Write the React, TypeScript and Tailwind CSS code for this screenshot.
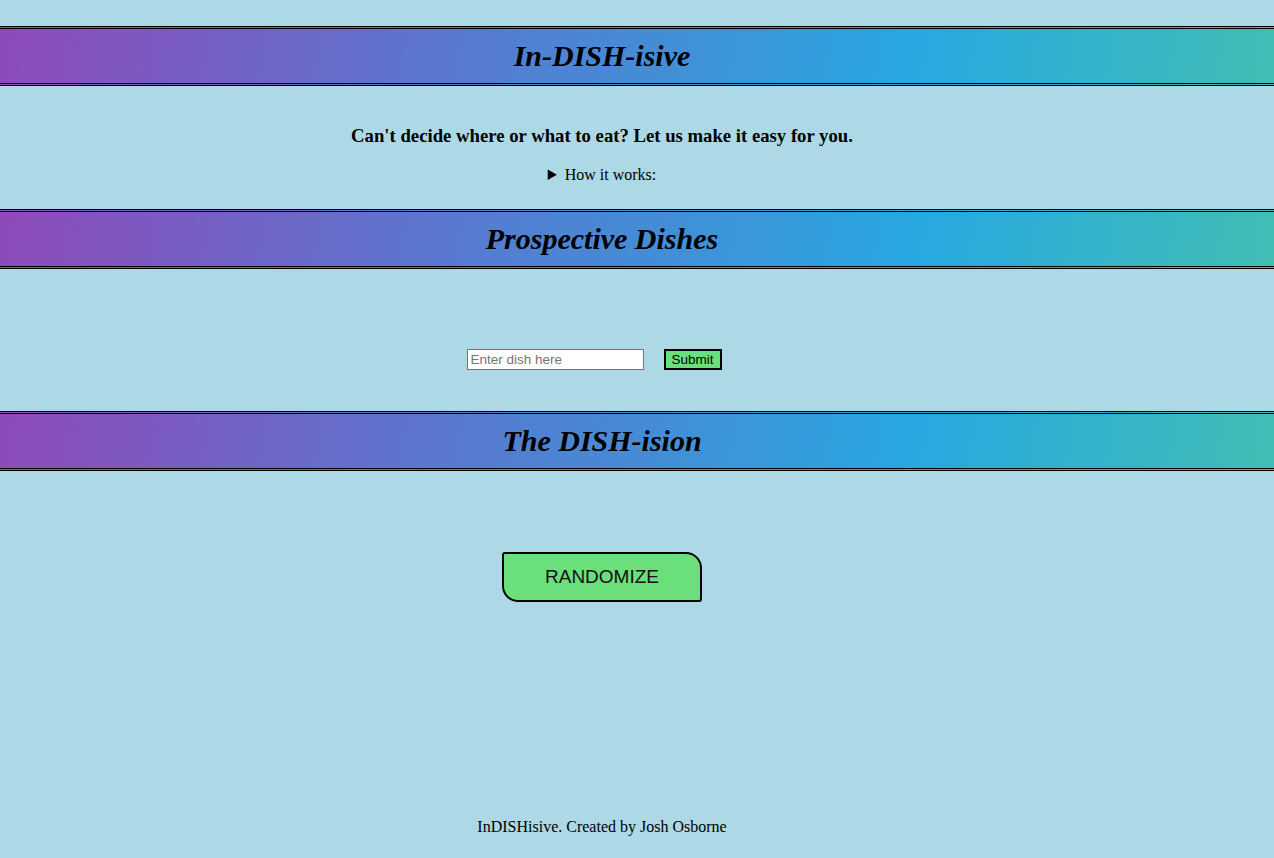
import { useState } from 'react';

function Banner({ title }: { title: string }) {
  return (
    <div className="w-full h-[60px] flex items-center justify-center border-y-[3px] border-double border-black bg-[linear-gradient(100deg,#8e4ab9_0%,#5a78cf_35%,#27a8e0_72%,#42bdb4_100%)]">
      <h1 className="pr-[70px] w-full text-center text-[30px] font-bold italic text-black leading-[36px]">{title}</h1>
    </div>
  );
}

export default function App() {
  const [dish, setDish] = useState('');
  const [dishes, setDishes] = useState<string[]>([]);

  const handleSubmit = () => {
    if (!dish.trim()) return;
    setDishes([...dishes, dish.trim()]);
    setDish('');
  };

  return (
    <div className="min-h-[858px] bg-[#add8e6] pt-[26px] flex flex-col text-black" style={{ fontFamily: '"Liberation Serif", "Times New Roman", serif' }}>
      <Banner title="In-DISH-isive" />

      {/* intro */}
      <div className="pr-[70px] flex flex-col items-center">
        <p className="mt-[39px] text-[18.72px] leading-[22px] font-bold">
          Can't decide where or what to eat? Let us make it easy for you.
        </p>
        <details className="mt-[19px] text-[16px] leading-[18px]">
          <summary className="cursor-pointer">How it works:</summary>
          <p className="mt-2">Add dishes you're thinking about, then hit randomize.</p>
        </details>
      </div>

      <div className="mt-[25px]">
        <Banner title="Prospective Dishes" />
      </div>

      {/* dish input */}
      <div className="pr-[86px] mt-[80px] flex justify-center items-center gap-[20px]" style={{ fontFamily: '"Liberation Sans", Arial, sans-serif' }}>
        <input
          value={dish}
          onChange={(e) => setDish(e.target.value)}
          placeholder="Enter dish here"
          className="w-[177px] h-[21px] px-[3px] bg-white border border-[#767676] text-[13.5px] placeholder:text-[#757575] outline-none"
        />
        <button
          onClick={handleSubmit}
          className="w-[58px] h-[21px] bg-[#6adf7b] border-2 border-black text-[13.5px] leading-none"
        >
          Submit
        </button>
      </div>
      {dishes.length > 0 && (
        <ul className="pr-[70px] mt-2 text-center">
          {dishes.map((d, i) => (
            <li key={i}>{d}</li>
          ))}
        </ul>
      )}

      <div className="mt-[41px]">
        <Banner title="The DISH-ision" />
      </div>

      <div className="pr-[70px] mt-[81px] flex justify-center">
        <button
          className="w-[200px] h-[50px] bg-[#6adf7b] border-2 border-black rounded-tl-[3px] rounded-br-[3px] rounded-tr-[16px] rounded-bl-[16px] text-[19px] text-[#111]"
          style={{ fontFamily: '"Liberation Sans", Arial, sans-serif' }}
        >
          RANDOMIZE
        </button>
      </div>

      <footer className="pr-[70px] mt-auto pb-[22px] text-center text-[16px] leading-[18px]">
        InDISHisive. Created by Josh Osborne
      </footer>
    </div>
  );
}
